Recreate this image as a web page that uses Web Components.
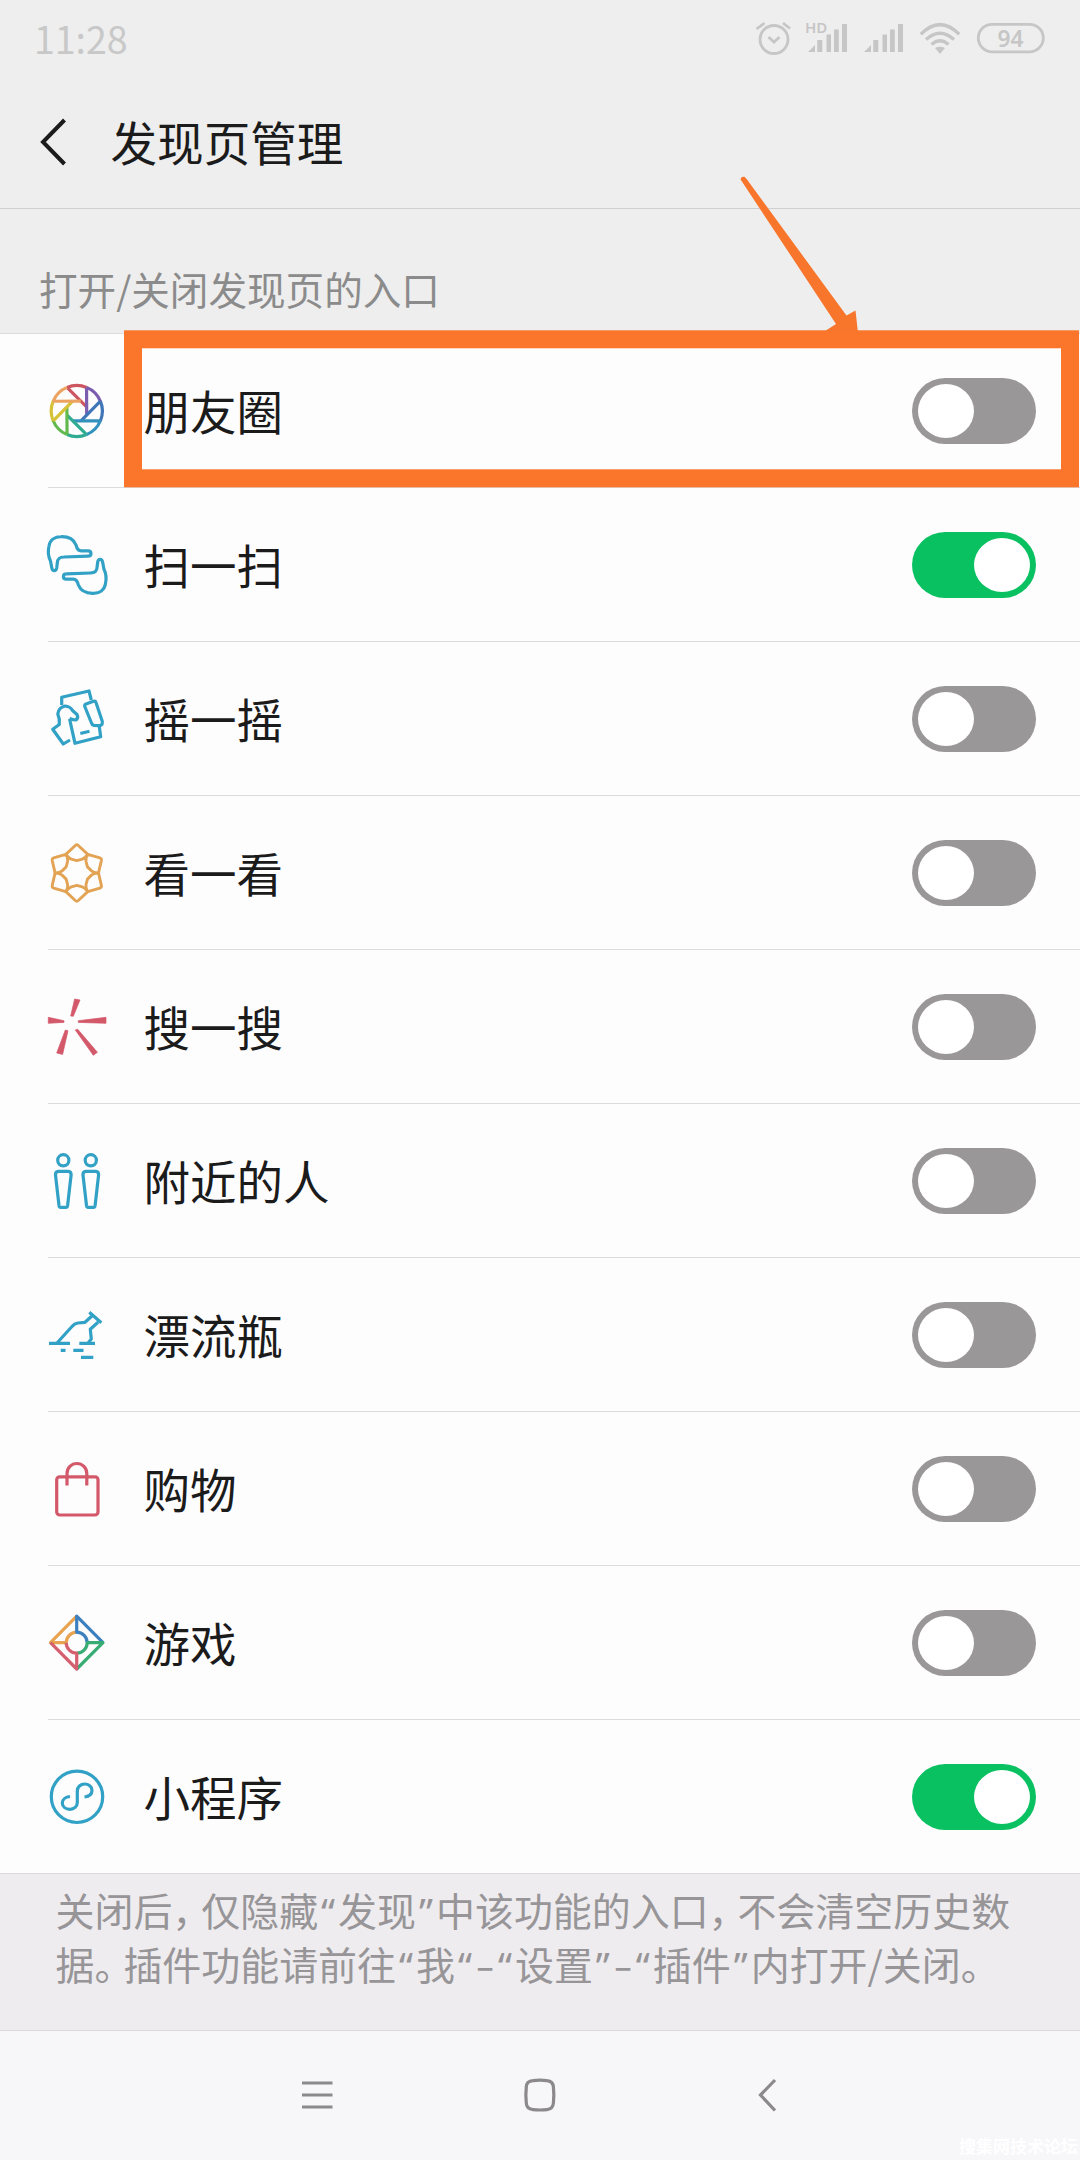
<!DOCTYPE html>
<html lang="zh-CN">
<head>
<meta charset="utf-8">
<title>发现页管理</title>
<style>
html,body{margin:0;padding:0}
body{width:1080px;height:2160px;overflow:hidden;background:#eeedee;font-family:"Noto Sans CJK SC","Noto Sans",sans-serif;color:#1b1b1c}
</style>
</head>
<body>
<discover-page></discover-page>
<script>
const define = (name, markup, setup) => customElements.define(name, class extends HTMLElement {
  constructor() {
    super();
    this.attachShadow({mode: 'open'});
  }
  connectedCallback() {
    this.shadowRoot.innerHTML = typeof markup === 'function' ? markup(this) : markup;
    if (setup) setup(this);
  }
});

const BLUE = '#32a1c6', RED = '#d3596a', AMBER = '#e2a354';

/* Aperture: eight blades, each an arc of the rim and the edge that runs in to the next blade. */
const aperture = () => {
  const colors = ['#cd5560', '#7b5cae', '#4076b8', '#3292bd', '#2fab92', '#62b94e', '#d6c238', '#eca260'];
  return colors.map((c, k) => `<path transform="translate(31.8 33) rotate(${45 * k})" stroke="${c}" d="M-9.8 -23.6A25.5 25.5 0 0 1 9.8 -23.6M-9.8 -23.6L9.8 -4.2"/>`).join('');
};
const kites = () => [0, 60, 120, 180, 240, 300].map(a =>
  `<path transform="translate(31.8 33) rotate(${a})" d="M-1.5 -27.5Q0 -28.8 1.5 -27.5L10.7 -18.9Q8.8 -15 5.5 -13.8L0 -12.3L-5.5 -13.8Q-8.8 -15 -10.7 -18.9Z"/>`).join('');
const hand = 'M6.8 36L5.5 29C3 24 3.3 17 4 14C5 8 10 4.7 16 4.7C24 4.5 29 8 31 13C32 17 33 18.8 36 18.8H43C47 18.8 47 24.2 43 24.2L19 25C14 25 12.5 27 12.3 31L11.7 36C11 39.5 7.5 39.5 6.8 36Z';

const ICONS = {
  moments: () => aperture(),
  scan: () => `<g stroke="${BLUE}"><path d="${hand}"/><path transform="rotate(180 32.2 33)" d="${hand}"/></g>`,
  shake: () => `<g stroke="${BLUE}"><path d="M16.7 19V11.3L44 5L46.3 14"/><path d="M54.3 40.7L55.7 50.7L30 57.3L24.6 33"/>
    <path d="M25 54L18.3 58L7.7 43.3L14.3 38.5Q15 33 12.8 28Q13.5 21.5 20 20Q25.5 20.5 27.5 24.5L32 28.5Q33.8 32 31 34Q28 34 24.5 32.5"/>
    <path d="M41 18L48.5 15.3Q50.5 14.8 51 16.5L57.3 35.5Q57.7 39.5 54.5 39.6L49 39.5Q47 39 46.5 37L39.8 20.5Q39.3 18.6 41 18Z"/><path d="M35.3 47.5L44.5 45.3"/></g>`,
  look: () => `<g stroke="${AMBER}" stroke-width="2.9">${kites()}</g>`,
  search: () => `<g fill="${RED}" stroke="${RED}" stroke-width=".7"><path d="M29.6 5L35 6L28.3 22.3L25.7 22Z"/><path d="M3.3 23.3V29.3L19 28.4V26.7Z"/><path d="M61 23.3V29.3L33.3 28.4V26.7Z"/><path d="M20.3 36L23 36.7L17.6 60.4L11.7 59Z"/><path d="M30.3 36L32.7 35.2L52.4 58.3L48.3 61.3Z"/></g>`,
  nearby: () => [18.3, 45.8].map(x => `<g stroke="${BLUE}" transform="translate(${x} 0)"><circle cy="12.3" r="5.6"/><path d="M-5 23.3H5Q8 23.5 7.8 27L4.3 57.5Q4 59.4 2.5 59.4H-2.5Q-4 59.4 -4.3 57.5L-7.8 27Q-8 23.5 -5 23.3Z"/></g>`).join(''),
  bottle: () => `<g stroke="${BLUE}"><path d="M4 41.3H25M12 41L26.5 25Q29.5 21.3 33 21L40 20.3L47.8 13.2M44.3 10.2L56.3 20.8M53 20.3L45.3 27.3L46.3 37L43 41M34.3 41.3H50M15.7 48.3H20.5M28.3 48.3H38.5M36 55.3H48.3"/></g>`,
  shop: () => `<g stroke="${RED}"><rect x="11.7" y="20.8" width="41.3" height="38.2" rx="3"/><path d="M22 29.5V17.5A9.9 10 0 0 1 41.8 17.5V29.5"/></g>`,
  games: () => `<g stroke-linecap="butt"><path stroke="#e7a34f" d="M31.7 6.2L5.5 32.7H21.2A10.5 10.5 0 0 1 31.7 22.2"/><path stroke="#3c80bf" d="M58 32.7L31.7 6.2V22.2A10.5 10.5 0 0 1 42.2 32.7"/><path stroke="#38ac75" d="M31.7 59L58 32.7H42.2A10.5 10.5 0 0 1 31.7 43.2"/><path stroke="#d45f6e" d="M5.5 32.7L31.7 59V43.2A10.5 10.5 0 0 1 21.2 32.7"/></g>`,
  mini: () => `<g stroke="${BLUE}"><circle cx="32" cy="32.8" r="25.7"/><path d="M39.5 33C44 32.5 47 30 47 26.3C47 22.5 43.5 20 39.7 20C35.5 20 32.3 23 32.3 27V38.5C32.3 42.5 29 45.3 25 45.3C20.8 45.3 17.3 42.8 17.3 39C17.3 35.5 20.5 33 25 32.5"/></g>`
};

define('row-icon', el => `<style>:host{display:block;width:64px;height:64px;margin-bottom:2px}svg{display:block}</style>
<svg width="64" height="64" viewBox="0 0 64 64" fill="none" stroke-width="3.2" stroke-linejoin="round">${ICONS[el.getAttribute('name')]()}</svg>`);

define('toggle-switch', `<style>
:host{display:flex;box-sizing:border-box;width:124px;height:66px;border-radius:33px;padding:6px;background:#9a9799;align-items:center}
:host([on]){background:#09c161;justify-content:flex-end}
i{display:block;width:56px;height:54px;border-radius:50%;background:#fff}
</style><i></i>`);

define('setting-row', el => `<style>
:host{display:flex;box-sizing:border-box;height:154px;padding:0 44px 0 45px;align-items:center;background:linear-gradient(#dcdbdd,#dcdbdd) 48px 100%/1032px 1px no-repeat}
:host(:last-of-type){background:none}
span{flex:1;margin-left:34.5px;font-size:46.5px;line-height:64px;padding-bottom:2px}
</style><row-icon name="${el.getAttribute('icon')}"></row-icon><span><slot></slot></span><toggle-switch ${el.hasAttribute('on') ? 'on' : ''}></toggle-switch>`);

const bars = `<path d="M0 52L7 45V52ZM9.3 40H14.3V52H9.3ZM18.5 34.5H23V52H18.5ZM26 29.5H30.8V52H26ZM34 24H39V52H34Z"/>`;
define('status-bar', `<style>
:host{display:flex;height:78px;justify-content:space-between;color:#c8c8c8}
time{font-size:37.5px;line-height:44px;padding:16px 0 0 34px;font-family:"Noto Sans CJK SC",sans-serif;font-weight:400}
svg{display:block}
text{font-family:"Noto Sans",sans-serif}
</style><time>11:28</time>
<svg width="330" height="78" viewBox="750 0 330 78" fill="none" stroke="#c6c6c6" stroke-width="2.8">
<circle cx="774" cy="39.5" r="14"/><path d="M756.5 29L764.5 23M783 23L790 28.5M768.5 37L774 42L779.5 37"/>
<g fill="#c6c6c6" stroke="none"><text x="805" y="33" font-size="15" font-weight="600">HD</text><g transform="translate(808 0)">${bars}</g><g transform="translate(864 0)">${bars}</g>
<path d="M935 48Q940 45.5 945 48L940 54Z"/><text x="997.5" y="46.5" font-size="24" font-weight="600" textLength="26" lengthAdjust="spacingAndGlyphs">94</text></g>
<path stroke-width="3.4" d="M920.8 34.2Q940 15 959.2 34.2M926 39.5Q940 27 954 39.5M931.5 44.5Q940 37 948.5 44.5"/>
<rect x="978.3" y="24.3" width="65" height="27.5" rx="13.7"/>
</svg>`);

define('title-bar', `<style>
:host{display:flex;box-sizing:border-box;height:131px;border-bottom:1px solid #cfcfcf;padding-left:36px;background:transparent}
svg{display:block;margin-top:36px}
h1{margin:0 0 0 39.5px;padding-top:30.5px;font-size:46.6px;line-height:64px;font-weight:400}
</style><svg width="35" height="56" viewBox="0 0 35 56" fill="none" stroke="#1b1b1c" stroke-width="4"><path d="M28.5 6L7 28L28.5 50"/></svg><h1><slot></slot></h1>`);

define('list-caption', `<style>
:host{display:block;box-sizing:border-box;height:125px;border-bottom:1px solid #dcdcdc;padding:50.5px 0 0 39px;font-size:38.6px;line-height:56px;color:#8b8b8b;white-space:nowrap}
</style><slot></slot>`);

define('foot-note', `<style>
:host{display:block;box-sizing:border-box;height:158px;border-top:1px solid #d9d8da;border-bottom:1px solid #d9d8da;padding:9px 0 0 55.5px;font-size:38.95px;line-height:52px;color:#979597;background:#eeecef}
p{margin:0;white-space:nowrap}
b{font-weight:400;letter-spacing:-10px}
q{quotes:none;display:inline-block;width:20px;text-align:center;font-family:"Noto Sans",sans-serif}
q::before,q::after{content:none}
i{font-style:normal;display:inline-block;width:20px;text-align:center;transform:scaleX(1.45)}
</style>
<p>关闭后<b>，</b>仅隐藏<q>“</q>发现<q>”</q>中该功能的入口<b>，</b>不会清空历史数</p>
<p>据<b>。</b>插件功能请前往<q>“</q>我<q>“</q><i>-</i><q>“</q>设置<q>”</q><i>-</i><q>“</q>插件<q>”</q>内打开/关闭。</p>`);

define('nav-bar', `<style>
:host{display:flex;position:relative;height:129px;background:#f7f6f9}
svg{display:block}
small{position:absolute;right:2px;bottom:4px;font-size:17px;line-height:20px;font-weight:700;color:#fff;white-space:nowrap}
</style><svg width="1080" height="129" viewBox="0 2031 1080 129" fill="none" stroke="#8b898c" stroke-width="3.2" stroke-linejoin="round">
<path d="M302 2083H332.5M302 2095H332.5M302 2107H332.5"/>
<path d="M533 2080.6Q540 2079.8 547 2080.6Q553 2081 553.4 2087Q554.3 2095 553.4 2103Q553 2109 547 2109.6Q540 2110.4 533 2109.6Q526.5 2109 526.3 2103Q525.4 2095 526.3 2087Q526.5 2081 533 2080.6Z"/>
<path stroke-linejoin="miter" d="M775 2080L760.5 2095L775 2110.5"/></svg><small>搜集网技术论坛</small>`);

/* Orange frame and arrow drawn over the first row. */
define('callout-mark', `<style>
:host{position:absolute;left:0;top:0;width:1080px;height:500px}
svg{display:block}
</style><svg width="1080" height="500" viewBox="0 0 1080 500"><rect x="133" y="339.3" width="937" height="139" fill="none" stroke="#fb762b" stroke-width="18"/>
<path fill="#f8762c" d="M740.6 179.5Q741 176 744.5 176.8L747 179.5L846.5 315.5L855.5 310.5L858 333H822L836 324Z"/></svg>`);

define('discover-page', `<style>
:host{display:flex;flex-direction:column;position:relative;width:1080px;height:2160px;background:#eee}
main{display:block;height:1539px;background:#fefdfe}
</style>
<status-bar></status-bar>
<title-bar>发现页管理</title-bar>
<list-caption>打开/关闭发现页的入口</list-caption>
<main>
<setting-row icon="moments">朋友圈</setting-row>
<setting-row icon="scan" on>扫一扫</setting-row>
<setting-row icon="shake">摇一摇</setting-row>
<setting-row icon="look">看一看</setting-row>
<setting-row icon="search">搜一搜</setting-row>
<setting-row icon="nearby">附近的人</setting-row>
<setting-row icon="bottle">漂流瓶</setting-row>
<setting-row icon="shop">购物</setting-row>
<setting-row icon="games">游戏</setting-row>
<setting-row icon="mini" on>小程序</setting-row>
</main>
<foot-note></foot-note>
<nav-bar></nav-bar>
<callout-mark></callout-mark>`);
</script>
</body>
</html>
